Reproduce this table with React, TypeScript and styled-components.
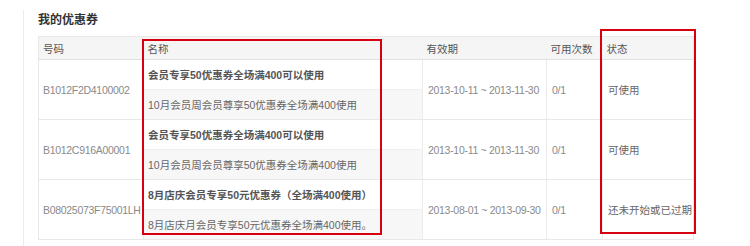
import React from 'react'
import styled, { createGlobalStyle } from 'styled-components'

interface Coupon {
    code: string
    title: string
    desc: string
    period: string
    uses: string
    status: string
}

const coupons: Coupon[] = [
    {
        code: 'B1012F2D4100002',
        title: '会员专享50优惠券全场满400可以使用',
        desc: '10月会员周会员尊享50优惠券全场满400使用',
        period: '2013-10-11 ~ 2013-11-30',
        uses: '0/1',
        status: '可使用',
    },
    {
        code: 'B1012C916A00001',
        title: '会员专享50优惠券全场满400可以使用',
        desc: '10月会员周会员尊享50优惠券全场满400使用',
        period: '2013-10-11 ~ 2013-11-30',
        uses: '0/1',
        status: '可使用',
    },
    {
        code: 'B08025073F75001LH',
        title: '8月店庆会员专享50元优惠券（全场满400使用）',
        desc: '8月店庆月会员专享50元优惠券全场满400使用。',
        period: '2013-08-01 ~ 2013-09-30',
        uses: '0/1',
        status: '还未开始或已过期',
    },
]

const columns = [
    { label: '号码', width: 105 },
    { label: '名称', width: 279 },
    { label: '有效期', width: 124 },
    { label: '可用次数', width: 56 },
    { label: '状态', width: 91 },
]

const GlobalStyle = createGlobalStyle`
    body {
        margin: 0;
        background: #fff;
        font-family: "Liberation Sans", "Noto Sans CJK SC", sans-serif;
        font-size: 10.5px;
    }
`

const Page = styled.div`
    padding-left: 23px;
    height: 246px;
    overflow: hidden;
`

const Panel = styled.section`
    margin-top: 10px;
    border-left: 1px solid #ececec;
    padding-left: 14px;
    height: 236px;
`

const Title = styled.h2`
    margin: 0;
    height: 20px;
    line-height: 20px;
    font-size: 12px;
    font-weight: bold;
    color: #333;
`

const TableWrap = styled.div`
    position: relative;
    margin-top: 6px;
    width: 655px;
`

const Table = styled.table`
    width: 655px;
    border-collapse: collapse;
    table-layout: fixed;
    border: 1px solid #e8e8e8;
`

const HeadCell = styled.th`
    height: 22px;
    padding: 0 0 0 4px;
    background: #f5f5f5;
    border-bottom: 1px solid #e2e2e2;
    text-align: left;
    font-weight: normal;
    color: #555;
    white-space: nowrap;
`

const Cell = styled.td<{ $muted?: boolean; $first?: boolean }>`
    padding: 0 0 0 ${p => (p.$first ? 4 : 5)}px;
    border-left: ${p => (p.$first ? 'none' : '1px solid #ebebeb')};
    border-bottom: 1px solid #e8e8e8;
    color: ${p => (p.$muted ? '#8a8a8a' : '#666')};
    letter-spacing: ${p => (p.$muted ? '-0.3px' : '0')};
    white-space: nowrap;
    overflow: visible;
`

const NameCell = styled.td<{ $alt?: boolean }>`
    height: 29px;
    padding: 0 0 0 4px;
    border-left: 1px solid #ebebeb;
    border-bottom: 1px solid ${p => (p.$alt ? '#e8e8e8' : '#efefef')};
    background: ${p => (p.$alt ? '#f7f7f7' : '#fff')};
    color: ${p => (p.$alt ? '#666' : '#555')};
    font-weight: ${p => (p.$alt ? 'normal' : 'bold')};
    white-space: nowrap;
`

const Mark = styled.div<{ $l: number; $t: number; $w: number; $h: number }>`
    position: absolute;
    left: ${p => p.$l}px;
    top: ${p => p.$t}px;
    width: ${p => p.$w}px;
    height: ${p => p.$h}px;
    box-sizing: border-box;
    border: 2px solid #d8000f;
    pointer-events: none;
`

const App = () => {
    return (
        <Page>
            <GlobalStyle />
            <Panel>
                <Title>我的优惠券</Title>
                <TableWrap>
                    <Table>
                        <colgroup>
                            {columns.map(col => (
                                <col key={col.label} style={{ width: col.width }} />
                            ))}
                        </colgroup>
                        <thead>
                            <tr>
                                {columns.map(col => (
                                    <HeadCell key={col.label}>{col.label}</HeadCell>
                                ))}
                            </tr>
                        </thead>
                        <tbody>
                            {coupons.map(c => (
                                <React.Fragment key={c.code}>
                                    <tr>
                                        <Cell $muted $first rowSpan={2}>{c.code}</Cell>
                                        <NameCell>{c.title}</NameCell>
                                        <Cell $muted rowSpan={2}>{c.period}</Cell>
                                        <Cell $muted rowSpan={2}>{c.uses}</Cell>
                                        <Cell rowSpan={2}>{c.status}</Cell>
                                    </tr>
                                    <tr>
                                        <NameCell $alt>{c.desc}</NameCell>
                                    </tr>
                                </React.Fragment>
                            ))}
                        </tbody>
                    </Table>
                    <Mark $l={104} $t={3} $w={240} $h={196} />
                    <Mark $l={562} $t={-7} $w={96} $h={205} />
                </TableWrap>
            </Panel>
        </Page>
    )
}

export default App
